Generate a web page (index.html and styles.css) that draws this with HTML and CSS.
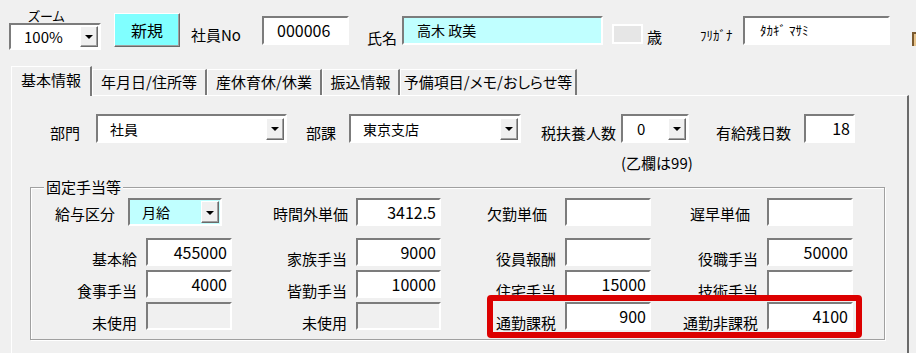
FILE: index.html
```html
<html>
<head>
    <title>社員情報</title>
    <meta charset="UTF-8"/>
    <link rel="stylesheet" href="styles.css">
</head>
<body>
<div class="form">
    <div class="topbar">
        <div class="zoom">
            <div class="zoom-label">ズーム</div>
            <div class="combo combo-zoom sunk"><span class="val num">100%</span><span class="drop"></span></div>
        </div>
        <button type="button" class="btn-new">新規</button>
        <span class="top-label lbl-no">社員No</span>
        <div class="box sunk box-no num">000006</div>
        <span class="top-label lbl-name">氏名</span>
        <div class="box sunk box-name">高木 政美</div>
        <div class="age"></div>
        <span class="top-label lbl-age">歳</span>
        <span class="top-label lbl-kana">ﾌﾘｶﾞﾅ</span>
        <div class="box sunk box-kana">ﾀｶｷﾞ ﾏｻﾐ</div>
        <span class="edge-icon"></span>
    </div>

    <div class="tabs">
        <div class="tab active t1">基本情報</div>
        <div class="tab t2">年月日/住所等</div>
        <div class="tab t3">産休育休/休業</div>
        <div class="tab t4">振込情報</div>
        <div class="tab t5">予備項目/メモ/おしらせ等</div>
    </div>

    <div class="panel">
        <div class="row-a">
            <span class="lbl l-bumon">部門</span>
            <div class="combo sunk c-bumon"><span class="val">社員</span><span class="drop"></span></div>
            <span class="lbl l-buka">部課</span>
            <div class="combo sunk c-buka"><span class="val">東京支店</span><span class="drop"></span></div>
            <span class="lbl l-fuyo">税扶養人数</span>
            <div class="combo sunk c-fuyo"><span class="val num">0</span><span class="drop"></span></div>
            <span class="lbl l-yukyu">有給残日数</span>
            <div class="box sunk right num b-yukyu">18</div>
        </div>
        <div class="note">(乙欄は99)</div>

        <fieldset class="frame">
            <legend>固定手当等</legend>
            <div class="grid g1">
                <span class="lbl">給与区分</span>
                <div class="combo sunk cyan"><span class="val">月給</span><span class="drop"></span></div>
                <span class="lbl">時間外単価</span>
                <div class="box sunk right num">3412.5</div>
                <span class="lbl">欠勤単価</span>
                <div class="box sunk right num"></div>
                <span class="lbl">遅早単価</span>
                <div class="box sunk right num"></div>
            </div>
            <div class="grid g2">
                <span class="lbl">基本給</span>
                <div class="box sunk right num">455000</div>
                <span class="lbl">家族手当</span>
                <div class="box sunk right num">9000</div>
                <span class="lbl">役員報酬</span>
                <div class="box sunk right num"></div>
                <span class="lbl">役職手当</span>
                <div class="box sunk right num">50000</div>
            </div>
            <div class="grid g2">
                <span class="lbl">食事手当</span>
                <div class="box sunk right num">4000</div>
                <span class="lbl">皆勤手当</span>
                <div class="box sunk right num">10000</div>
                <span class="lbl">住宅手当</span>
                <div class="box sunk right num">15000</div>
                <span class="lbl">技術手当</span>
                <div class="box sunk right num"></div>
            </div>
            <div class="grid g2">
                <span class="lbl">未使用</span>
                <div class="box sunk off"></div>
                <span class="lbl">未使用</span>
                <div class="box sunk off"></div>
                <span class="lbl">通勤課税</span>
                <div class="box sunk right num">900</div>
                <span class="lbl">通勤非課税</span>
                <div class="box sunk right num">4100</div>
            </div>
        </fieldset>
    </div>
</div>
<div class="mark"></div>
</body>
</html>
```

FILE: styles.css
```css
body {
    margin: 0;
    background: #f0f0f0;
    color: #000;
    font-family: "Noto Sans CJK JP", sans-serif;
    font-size: 15px;
    font-feature-settings: "palt";
    overflow: hidden;
}
.form {
    width: 916px;
    height: 353px;
}

/* controls */
.sunk {
    box-sizing: border-box;
    background: #fff;
    border: 2px solid;
    border-color: #7c7c7c #fff #fff #7c7c7c;
}
.box {
    height: 28px;
    line-height: 24px;
    font-size: 14px;
    white-space: nowrap;
}
.num {
    font-size: 16px;
    font-feature-settings: normal;
}
.right {
    text-align: right;
    padding-right: 3px;
}
.off {
    background: #f0f0f0;
}
.cyan {
    background: #c0ffff;
}
.combo {
    display: flex;
    align-items: center;
    height: 29px;
    font-size: 14px;
}
.combo .val {
    padding-left: 12px;
    flex: 1;
}
.drop {
    box-sizing: border-box;
    width: 18px;
    height: 22px;
    margin-right: 1px;
    background: #f0f0f0;
    border: 1px solid;
    border-color: #fff #6a6a6a #6a6a6a #fff;
    box-shadow: inset -1px -1px 0 #a0a0a0;
    display: flex;
    align-items: center;
    justify-content: center;
}
.drop::after {
    content: "";
    border-left: 4px solid transparent;
    border-right: 4px solid transparent;
    border-top: 4px solid #000;
    margin-top: 1px;
}

/* top bar */
.topbar {
    display: flex;
    align-items: flex-start;
    height: 66px;
}
.topbar > * {
    flex-shrink: 0;
}
.zoom {
    margin-left: 9px;
    width: 92px;
}
.zoom-label {
    font-size: 13px;
    line-height: 15px;
    margin-top: 8px;
    padding-left: 19px;
}
.combo-zoom {
    height: 27px;
}
.combo-zoom .val {
    padding-left: 13px;
    font-size: 15px;
}
.combo-zoom .drop {
    height: 21px;
}
.btn-new {
    margin: 13px 0 0 13px;
    width: 66px;
    height: 34px;
    padding: 0;
    background: #80ffff;
    border: 1px solid;
    border-color: #fff #6a6a6a #6a6a6a #fff;
    box-shadow: inset -1px -1px 0 #a0a0a0;
    font-family: inherit;
    font-size: 16px;
}
.top-label {
    line-height: 16px;
    margin-top: 27px;
}
.lbl-no {
    margin-left: 11px;
    width: 71px;
}
.box-no {
    width: 87px;
    height: 29px;
    margin-top: 16px;
    padding-left: 13px;
}
.lbl-name {
    margin-left: 18px;
    width: 35px;
    margin-top: 30px;
}
.box-name {
    width: 201px;
    height: 29px;
    margin-top: 16px;
    padding-left: 13px;
    background: #c0ffff;
}
.age {
    box-sizing: border-box;
    width: 31px;
    height: 20px;
    margin: 24px 0 0 9px;
    background: #e6e6e6;
    border: 2px solid #fff;
}
.lbl-age {
    margin-left: 4px;
    margin-top: 29px;
    width: 53px;
}
.lbl-kana {
    font-size: 13px;
    width: 43px;
    margin-top: 27px;
}
.box-kana {
    width: 147px;
    height: 29px;
    margin-top: 16px;
    padding-left: 15px;
    font-size: 13px;
}
.edge-icon {
    width: 10px;
    height: 14px;
    margin: 28px 0 0 22px;
    background: #e8c48c;
    border-top: 4px solid #f0f0f0;
    box-shadow: inset 2px 2px 0 #7a5a30;
}

/* tabs */
.tabs {
    display: flex;
    align-items: flex-end;
    margin-left: 11px;
    height: 29px;
}
.tab {
    box-sizing: border-box;
    height: 26px;
    line-height: 24px;
    text-align: center;
    border-top: 1px solid #fff;
    border-left: 1px solid #fff;
    border-right: 2px solid #7a7a7a;
    white-space: nowrap;
}
.tab.active {
    height: 30px;
    margin-bottom: -1px;
    line-height: 26px;
    position: relative;
    background: #f0f0f0;
}
.t1 { width: 81px; }
.t2 { width: 115px; }
.t3 { width: 115px; }
.t4 { width: 78px; }
.t5 { width: 177px; }

/* panel */
.panel {
    margin-left: 11px;
    width: 898px;
    height: 270px;
    box-sizing: border-box;
    border-top: 1px solid #fff;
    border-left: 1px solid #fff;
    border-right: 2px solid #6a6a6a;
    padding-top: 18px;
}
.row-a {
    display: flex;
    align-items: flex-end;
}
.row-a .lbl {
    line-height: 16px;
    margin-bottom: 2px;
}
.l-bumon { margin-left: 38px; width: 46px; }
.c-bumon { width: 191px; }
.l-buka { margin-left: 19px; width: 43px; }
.c-buka { width: 172px; }
.l-fuyo { margin-left: 20px; width: 80px; }
.c-fuyo { width: 68px; }
.c-fuyo .val { padding-left: 14px; font-size: 15px; }
.l-yukyu { margin-left: 27px; width: 88px; }
.b-yukyu { width: 51px; height: 29px; }
.note {
    margin: 11px 0 0 609px;
    line-height: 18px;
    font-feature-settings: normal;
}

/* frame */
.frame {
    margin: 7px 0 0 18px;
    padding: 0 0 9px 0;
    width: 855px;
    box-sizing: border-box;
    border: 1px solid #a0a0a0;
    box-shadow: inset 1px 1px 0 #fff, 1px 1px 0 #fff;
    min-width: 0;
}
.frame legend {
    margin-left: 13px;
    padding: 0 2px;
    line-height: 16px;
    background: #f0f0f0;
}
.grid {
    display: grid;
    height: 28px;
    margin-top: 4px;
}
.grid .lbl {
    text-align: right;
    padding-right: 9px;
    white-space: nowrap;
    align-self: end;
    line-height: 14px;
}
.g1 {
    margin-top: 3px;
    grid-template-columns: 97px 94px 134px 85px 124px 86px 116px 86px;
}
.g1 .lbl {
    align-self: center;
    line-height: 16px;
    margin-top: 4px;
}
.g1 .lbl:nth-child(1) { padding-right: 13px; }
.g1 .lbl:nth-child(3) { padding-right: 8px; }
.g1 .lbl:nth-child(5) { padding-right: 18px; }
.g1 .lbl:nth-child(7) { padding-right: 17px; }
.g1 .combo { height: 28px; }
.g1 + .g2 {
    margin-top: 12px;
}
.g2 {
    grid-template-columns: 115px 86px 124px 85px 124px 86px 116px 86px;
}

/* annotation */
.mark {
    position: absolute;
    left: 487px;
    top: 295px;
    width: 375px;
    height: 43px;
    box-sizing: border-box;
    border: 6px solid #dc0000;
    border-radius: 4px;
}
```
